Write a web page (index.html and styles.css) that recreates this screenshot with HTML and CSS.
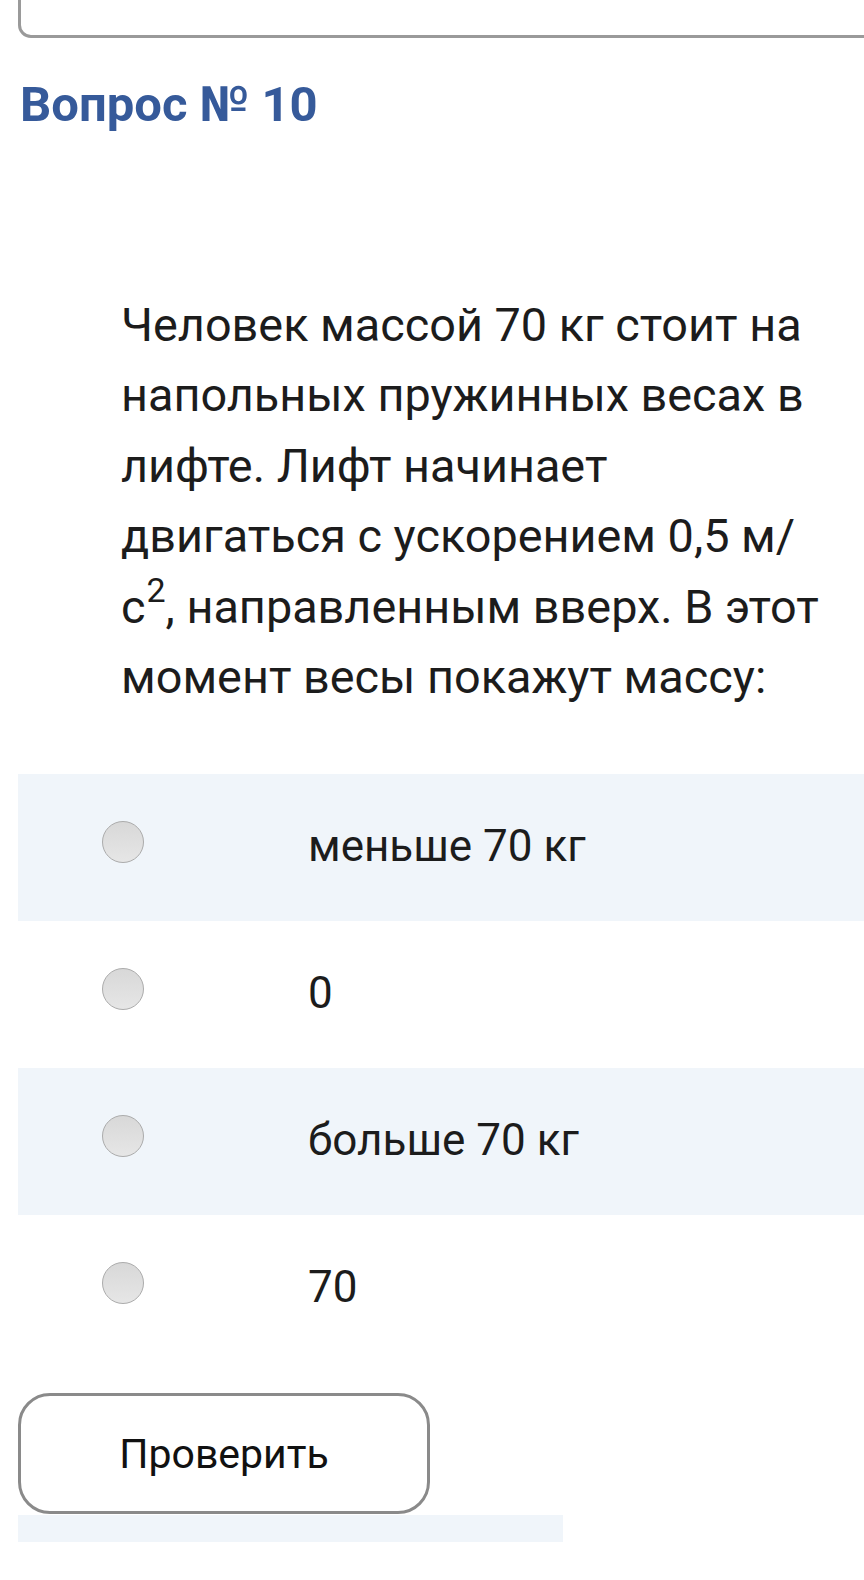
FILE: index.html
```html
<!DOCTYPE html>
<html lang="ru">
<head>
<meta charset="utf-8">
<title>Вопрос № 10</title>
<link rel="stylesheet" href="styles.css">
</head>
<body>
<div class="prev-box"></div>
<h2 class="q-title">Вопрос № 10</h2>
<p class="q-text">Человек массой 70 кг стоит на<br>напольных пружинных весах в<br>лифте. Лифт начинает<br>двигаться с ускорением 0,5 м/<br>с<sup>2</sup>, направленным вверх. В этот<br>момент весы покажут массу:</p>
<div class="options">
  <label class="option shaded"><span class="radio"></span><span class="opt-text">меньше 70 кг</span></label>
  <label class="option"><span class="radio"></span><span class="opt-text">0</span></label>
  <label class="option shaded"><span class="radio"></span><span class="opt-text">больше 70 кг</span></label>
  <label class="option"><span class="radio"></span><span class="opt-text">70</span></label>
</div>
<button class="check-btn">Проверить</button>
<div class="bottom-bar"></div>
</body>
</html>
```
FILE: styles.css
```css
html, body {
  margin: 0;
  padding: 0;
  background: #ffffff;
  overflow: hidden;
}
body {
  font-family: Roboto, "Noto Sans", sans-serif;
  color: #1c1c1c;
  width: 864px;
}
.prev-box {
  height: 60px;
  margin-top: -22px;
  margin-left: 18px;
  margin-right: -30px;
  border: 3px solid #9a9a9a;
  border-radius: 13px;
  box-sizing: border-box;
}
.q-title {
  margin: 37px 0 0 20px;
  font-family: Roboto, sans-serif;
  font-weight: 700;
  font-size: 49px;
  line-height: 59px;
  color: #365a9a;
}
.q-text {
  margin: 156px 0 0 121px;
  font-size: 46.8px;
  line-height: 70.4px;
  color: #1c1c1c;
  white-space: nowrap;
}
.q-text sup {
  font-size: 34px;
  line-height: 0;
  vertical-align: 0.62em;
  margin-left: 1px;
}
.options {
  margin: 62px 0 0 18px;
}
.option {
  display: flex;
  align-items: center;
  height: 147px;
  padding-left: 84px;
}
.option.shaded {
  background: #f0f5fa;
}
.radio {
  width: 40px;
  height: 40px;
  border-radius: 50%;
  border: 1px solid #ababab;
  background: linear-gradient(#d8d8d8, #e6e6e6);
  flex: none;
  margin-right: 164px;
  margin-top: -12px;
}
.opt-text {
  font-size: 44px;
  line-height: 70.4px;
  margin-top: -4px;
}
.check-btn {
  display: flex;
  align-items: center;
  justify-content: center;
  margin: 31px 0 0 18px;
  width: 412px;
  height: 121px;
  border: 3px solid #8a8a8a;
  border-radius: 32px;
  background: #ffffff;
  font-family: Roboto, sans-serif;
  font-size: 41px;
  color: #111111;
  padding: 0;
}
.bottom-bar {
  margin: 1px 0 0 18px;
  width: 545px;
  height: 27px;
  background: #f0f5fa;
}
```
